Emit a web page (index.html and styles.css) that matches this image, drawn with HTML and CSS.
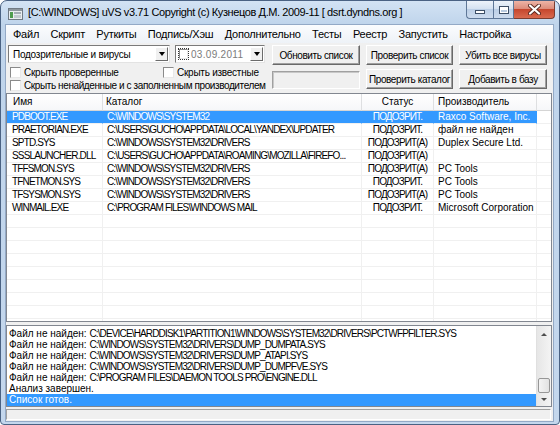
FILE: index.html
```html
<!DOCTYPE html>
<html lang="ru">
<head>
  <meta charset="UTF-8">
  <title>uVS v3.71</title>
  <link rel="stylesheet" href="styles.css">
</head>
<body>
  <div class="window">
    <div class="titlebar">
      <svg class="app-icon" width="15" height="12" viewBox="0 0 15 12">
        <rect x="0.5" y="0.5" width="14" height="11" fill="#e9edf0" stroke="#707a84"/>
        <rect x="1" y="1" width="13" height="2" fill="#8d979f"/>
        <rect x="2" y="4" width="3" height="6" fill="#4f9c4f"/>
        <rect x="6" y="4" width="7" height="2" fill="#a3adb5"/>
        <rect x="6" y="7" width="7" height="3" fill="#c2cad0"/>
      </svg>
      <span class="title">[C:\WINDOWS] uVS v3.71 Copyright (c) Кузнецов Д.М. 2009-11 [ dsrt.dyndns.org ]</span>
      <div class="caption-buttons">
        <span class="cap cap-min"><span class="glyph-min"></span></span>
        <span class="cap cap-max"><span class="glyph-max"></span></span>
        <span class="cap cap-close">
          <svg width="13" height="11" viewBox="0 0 13 11">
            <path d="M2 1.5 L11 9.5 M11 1.5 L2 9.5" stroke="#5a2a22" stroke-width="4" stroke-linecap="round"/>
            <path d="M2 1.5 L11 9.5 M11 1.5 L2 9.5" stroke="#fff" stroke-width="2.2" stroke-linecap="round"/>
          </svg>
        </span>
      </div>
    </div>

    <div class="client">
      <ul class="menubar">
        <li>Файл</li>
        <li>Скрипт</li>
        <li>Руткиты</li>
        <li>Подпись/Хэш</li>
        <li>Дополнительно</li>
        <li>Тесты</li>
        <li>Реестр</li>
        <li>Запустить</li>
        <li>Настройка</li>
      </ul>

      <div class="toolbar">
        <div class="filters">
          <div class="filter-row">
            <div class="combo">
              <span class="combo-text">Подозрительные и вирусы</span>
              <span class="drop-btn"></span>
            </div>
            <div class="combo date">
              <span class="date-check"><span class="box"></span></span>
              <span class="combo-text muted">03.09.2011</span>
              <span class="drop-btn"></span>
            </div>
          </div>
          <div class="check-row">
            <label class="check wide"><span class="box"></span>Скрыть проверенные</label>
            <label class="check"><span class="box"></span>Скрыть известные</label>
          </div>
          <div class="check-row">
            <label class="check tight"><span class="box"></span>Скрыть ненайденные и с заполненным производителем</label>
          </div>
        </div>
        <div class="tool-col">
          <button class="btn">Обновить список</button>
          <div class="edit"></div>
        </div>
        <div class="tool-col">
          <button class="btn">Проверить список</button>
          <button class="btn">Проверить каталог</button>
        </div>
        <div class="tool-col">
          <button class="btn">Убить все вирусы</button>
          <button class="btn">Добавить в базу</button>
        </div>
      </div>

      <div class="listview">
        <div class="row head">
          <div class="cell c-name">Имя</div>
          <div class="cell c-path">Каталог</div>
          <div class="cell c-status">Статус</div>
          <div class="cell c-vendor">Производитель</div>
          <div class="cell c-extra"></div>
        </div>
        <div class="row sel">
          <div class="cell c-name caps">PDBOOT.EXE</div>
          <div class="cell c-path caps">C:\WINDOWS\SYSTEM32</div>
          <div class="cell c-status caps">ПОДОЗРИТ.</div>
          <div class="cell c-vendor">Raxco Software, Inc.</div>
          <div class="cell c-extra"></div>
        </div>
        <div class="row">
          <div class="cell c-name caps">PRAETORIAN.EXE</div>
          <div class="cell c-path caps">C:\USERS\GUCHO\APPDATA\LOCAL\YANDEX\UPDATER</div>
          <div class="cell c-status caps">ПОДОЗРИТ.</div>
          <div class="cell c-vendor">файл не найден</div>
          <div class="cell c-extra"></div>
        </div>
        <div class="row">
          <div class="cell c-name caps">SPTD.SYS</div>
          <div class="cell c-path caps">C:\WINDOWS\SYSTEM32\DRIVERS</div>
          <div class="cell c-status caps">ПОДОЗРИТ(А)</div>
          <div class="cell c-vendor">Duplex Secure Ltd.</div>
          <div class="cell c-extra"></div>
        </div>
        <div class="row">
          <div class="cell c-name caps">SSSLAUNCHER.DLL</div>
          <div class="cell c-path caps">C:\USERS\GUCHO\APPDATA\ROAMING\MOZILLA\FIREFO...</div>
          <div class="cell c-status caps">ПОДОЗРИТ(А)</div>
          <div class="cell c-vendor"></div>
          <div class="cell c-extra"></div>
        </div>
        <div class="row">
          <div class="cell c-name caps">TFFSMON.SYS</div>
          <div class="cell c-path caps">C:\WINDOWS\SYSTEM32\DRIVERS</div>
          <div class="cell c-status caps">ПОДОЗРИТ(А)</div>
          <div class="cell c-vendor">PC Tools</div>
          <div class="cell c-extra"></div>
        </div>
        <div class="row">
          <div class="cell c-name caps">TFNETMON.SYS</div>
          <div class="cell c-path caps">C:\WINDOWS\SYSTEM32\DRIVERS</div>
          <div class="cell c-status caps">ПОДОЗРИТ.</div>
          <div class="cell c-vendor">PC Tools</div>
          <div class="cell c-extra"></div>
        </div>
        <div class="row">
          <div class="cell c-name caps">TFSYSMON.SYS</div>
          <div class="cell c-path caps">C:\WINDOWS\SYSTEM32\DRIVERS</div>
          <div class="cell c-status caps">ПОДОЗРИТ(А)</div>
          <div class="cell c-vendor">PC Tools</div>
          <div class="cell c-extra"></div>
        </div>
        <div class="row">
          <div class="cell c-name caps">WINMAIL.EXE</div>
          <div class="cell c-path caps">C:\PROGRAM FILES\WINDOWS MAIL</div>
          <div class="cell c-status caps">ПОДОЗРИТ.</div>
          <div class="cell c-vendor">Microsoft Corporation</div>
          <div class="cell c-extra"></div>
        </div>
        <div class="row"><div class="cell c-name"></div><div class="cell c-path"></div><div class="cell c-status"></div><div class="cell c-vendor"></div><div class="cell c-extra"></div></div>
        <div class="row"><div class="cell c-name"></div><div class="cell c-path"></div><div class="cell c-status"></div><div class="cell c-vendor"></div><div class="cell c-extra"></div></div>
        <div class="row"><div class="cell c-name"></div><div class="cell c-path"></div><div class="cell c-status"></div><div class="cell c-vendor"></div><div class="cell c-extra"></div></div>
        <div class="row"><div class="cell c-name"></div><div class="cell c-path"></div><div class="cell c-status"></div><div class="cell c-vendor"></div><div class="cell c-extra"></div></div>
        <div class="row"><div class="cell c-name"></div><div class="cell c-path"></div><div class="cell c-status"></div><div class="cell c-vendor"></div><div class="cell c-extra"></div></div>
        <div class="row"><div class="cell c-name"></div><div class="cell c-path"></div><div class="cell c-status"></div><div class="cell c-vendor"></div><div class="cell c-extra"></div></div>
        <div class="row"><div class="cell c-name"></div><div class="cell c-path"></div><div class="cell c-status"></div><div class="cell c-vendor"></div><div class="cell c-extra"></div></div>
        <div class="row"><div class="cell c-name"></div><div class="cell c-path"></div><div class="cell c-status"></div><div class="cell c-vendor"></div><div class="cell c-extra"></div></div>
        <div class="row"><div class="cell c-name"></div><div class="cell c-path"></div><div class="cell c-status"></div><div class="cell c-vendor"></div><div class="cell c-extra"></div></div>
      </div>

      <div class="log">
        <div class="log-lines">
          <div class="log-line">Файл не найден: <span class="caps">C:\DEVICE\HARDDISK1\PARTITION1\WINDOWS\SYSTEM32\DRIVERS\PCTWFPFILTER.SYS</span></div>
          <div class="log-line">Файл не найден: <span class="caps">C:\WINDOWS\SYSTEM32\DRIVERS\DUMP_DUMPATA.SYS</span></div>
          <div class="log-line">Файл не найден: <span class="caps">C:\WINDOWS\SYSTEM32\DRIVERS\DUMP_ATAPI.SYS</span></div>
          <div class="log-line">Файл не найден: <span class="caps">C:\WINDOWS\SYSTEM32\DRIVERS\DUMP_DUMPFVE.SYS</span></div>
          <div class="log-line">Файл не найден: <span class="caps">C:\PROGRAM FILES\DAEMON TOOLS PRO\ENGINE.DLL</span></div>
          <div class="log-line">Анализ завершен.</div>
          <div class="log-line sel">Список готов.</div>
        </div>
        <div class="vscroll">
          <span class="sb-arrow up"></span>
          <span class="sb-track"></span>
          <span class="sb-thumb"></span>
          <span class="sb-arrow down"></span>
        </div>
      </div>

      <div class="statusbar"><div class="panel"></div></div>
    </div>
  </div>
</body>
</html>
```

FILE: styles.css
```css
/* Base */
* { box-sizing: border-box; }
body {
  margin: 0;
  font-family: "Liberation Sans", Arial, sans-serif;
  font-size: 10px;
  color: #000;
  background: #fff;
}

/* Window frame */
.window {
  width: 560px;
  height: 425px;
  border: 1px solid #4a6283;
  border-radius: 7px 7px 4px 4px;
  background: linear-gradient(#d3e3f4, #bfd4eb 24px, #c4d7ed);
  display: flex;
  flex-direction: column;
  overflow: hidden;
}
.titlebar {
  height: 24px;
  display: flex;
  align-items: flex-start;
  padding-left: 7px;
}
.app-icon {
  margin-top: 7px;
  flex: none;
}
.title {
  margin: 5px 0 0 5px;
  font-size: 11px;
  letter-spacing: -0.4px;
  white-space: nowrap;
}
.caption-buttons {
  margin-left: auto;
  margin-right: 4px;
  display: flex;
}
.cap {
  height: 18px;
  border: 1px solid #5e7797;
  border-top: none;
  display: flex;
  align-items: center;
  justify-content: center;
  background: linear-gradient(#edf3fa, #d5e2f1 45%, #bccfe6 50%, #cddcee);
}
.cap-min {
  width: 27px;
  border-right: none;
  border-bottom-left-radius: 4px;
}
.cap-max {
  width: 21px;
}
.cap-close {
  width: 41px;
  border-left: none;
  border-color: #7b3d31;
  border-bottom-right-radius: 4px;
  background: linear-gradient(#eeb4a6, #dc8d7c 45%, #c6472e 50%, #d96a4f);
}
.glyph-min {
  width: 10px;
  height: 4px;
  margin-top: 5px;
  background: #fff;
  border: 1px solid #3d4f66;
}
.glyph-max {
  width: 10px;
  height: 8px;
  border: 1px solid #3d4f66;
  box-shadow: inset 0 0 0 1px #fff, inset 0 2px 0 1px #fff;
  background: #b9cbe0;
}

/* Client area */
.client {
  margin: 0 6px 3px 5px;
  height: 396px;
  background: #f0f0f0;
  box-shadow: 0 0 0 1px #93a9c6;
  display: flex;
  flex-direction: column;
}
.menubar {
  list-style: none;
  margin: 0;
  padding: 0 0 0 1px;
  height: 18px;
  display: flex;
  background: linear-gradient(#fbfcfe, #eef2f7);
  font-size: 11px;
  letter-spacing: -0.25px;
}
.menubar li {
  padding: 0 5.4px 0 6px;
  line-height: 18px;
}

/* Toolbar */
.toolbar {
  height: 50px;
  display: grid;
  grid-template-columns: 258px 88px 87px 88px;
  column-gap: 6px;
  padding: 2px 0 0 2px;
}
.filters {
  letter-spacing: -0.25px;
}
.filter-row {
  display: flex;
  gap: 5px;
  height: 18px;
}
.combo {
  width: 162px;
  height: 18px;
  background: #fff;
  border: 1px solid;
  border-color: #7a7a7a #e3e3e3 #e3e3e3 #7a7a7a;
  display: flex;
  align-items: center;
  padding: 1px;
}
.combo.date {
  width: 90px;
}
.combo-text {
  flex: 1;
  padding-left: 3px;
  white-space: nowrap;
  overflow: hidden;
}
.combo-text.muted {
  color: #7b7b7b;
  padding-left: 2px;
  letter-spacing: 0.3px;
}
.date-check {
  margin-left: 1px;
  padding: 1px;
  outline: 1px dotted #333;
  outline-offset: -1px;
  display: flex;
}
.drop-btn {
  width: 13px;
  height: 14px;
  background: #f0f0f0;
  border: 1px solid;
  border-color: #fff #6b6b6b #6b6b6b #fff;
  display: flex;
  align-items: center;
  justify-content: center;
}
.drop-btn::after {
  content: "";
  border-style: solid;
  border-width: 4px 3.5px 0 3.5px;
  border-color: #000 transparent transparent transparent;
}
.check-row {
  display: flex;
  height: 13px;
  margin-top: 3px;
  align-items: center;
}
.check-row + .check-row {
  margin-top: 0;
}
.check {
  display: flex;
  align-items: center;
  white-space: nowrap;
  padding-left: 2px;
}
.check.wide {
  width: 153px;
}
.check.tight {
  letter-spacing: -0.4px;
}
.box {
  width: 11px;
  height: 11px;
  background: #fff;
  border: 1px solid;
  border-color: #8a8a8a #e8e8e8 #e8e8e8 #8a8a8a;
  margin-right: 3px;
  flex: none;
}
.date-check .box {
  width: 9px;
  height: 10px;
  margin: 0;
}
.tool-col {
  display: flex;
  flex-direction: column;
  gap: 4px;
}
.btn {
  height: 20px;
  padding: 0;
  font: inherit;
  letter-spacing: -0.4px;
  color: #000;
  background: #f0f0f0;
  border: 1px solid;
  border-color: #fff #696969 #696969 #fff;
  box-shadow: inset -1px -1px 0 #a0a0a0;
  white-space: nowrap;
}
.edit {
  height: 18px;
  margin-top: 2px;
  background: #f0f0f0;
  border: 1px solid;
  border-color: #a0a0a0 #fff #fff #a0a0a0;
  box-shadow: inset 1px 1px 0 #c8c8c8;
}

/* List view */
.listview {
  height: 229px;
  margin-right: 1px;
  border: 1px solid #828790;
  background: #fff;
  overflow: hidden;
}
.row {
  display: flex;
  height: 13px;
}
.cell {
  flex: none;
  height: 13px;
  line-height: 12px;
  padding-left: 4px;
  border-right: 1px solid #f0f0f0;
  border-bottom: 1px solid #f0f0f0;
  white-space: nowrap;
  overflow: hidden;
}
.caps {
  letter-spacing: -0.85px;
}
.c-name { width: 96px; padding-left: 5px; }
.c-path { width: 259px; }
.c-status { width: 72px; padding-left: 0; text-align: center; }
.c-vendor { width: 103px; }
.c-extra { flex: 1; border-right: none; }
.row.head {
  height: 17px;
}
.row.head .cell {
  height: 17px;
  line-height: 16px;
  background: linear-gradient(#fff, #f6f7f9);
  border-right-color: #dedfe1;
  border-bottom-color: #d5d5d5;
}
.row.head .c-name { padding-left: 6px; }
.row.head .c-path { padding-left: 3px; }
.row.sel .cell:not(.c-extra) {
  background: #3399ff;
  color: #fff;
  border-right-color: #3399ff;
}

/* Log */
.log {
  height: 82px;
  margin: 3px 1px 0 0;
  border: 1px solid #828790;
  background: #fff;
  display: flex;
}
.log-lines {
  flex: 1;
  padding: 2px 0 0 0;
  overflow: hidden;
}
.log-line {
  height: 11px;
  line-height: 11px;
  padding-left: 2px;
  white-space: nowrap;
}
.log-line.sel {
  height: 12px;
  background: #3399ff;
  color: #fff;
}
.vscroll {
  width: 15px;
  display: flex;
  flex-direction: column;
  background: linear-gradient(90deg, #e6e6e6, #f4f4f4);
  border-left: 1px solid #e0e0e0;
}
.sb-arrow {
  display: flex;
  align-items: center;
  justify-content: center;
}
.sb-arrow.up { height: 16px; }
.sb-arrow.down { height: 13px; }
.sb-arrow.up::after,
.sb-arrow.down::after {
  content: "";
  border-style: solid;
  border-color: transparent;
}
.sb-arrow.up::after {
  border-width: 0 3px 3px 3px;
  border-bottom-color: #4d4d4d;
}
.sb-arrow.down::after {
  border-width: 3px 3px 0 3px;
  border-top-color: #4d4d4d;
}
.sb-track { height: 36px; }
.sb-thumb {
  height: 15px;
  margin: 0 1px;
  border: 1px solid #979797;
  border-radius: 2px;
  background: linear-gradient(90deg, #f4f4f4, #e2e2e2);
}

/* Status bar */
.statusbar {
  height: 13px;
  margin-top: 1px;
  padding: 1px 2px 0 0;
}
.panel {
  height: 11px;
  border: 1px solid;
  border-color: #a0a0a0 #fff #fff #a0a0a0;
}
```
